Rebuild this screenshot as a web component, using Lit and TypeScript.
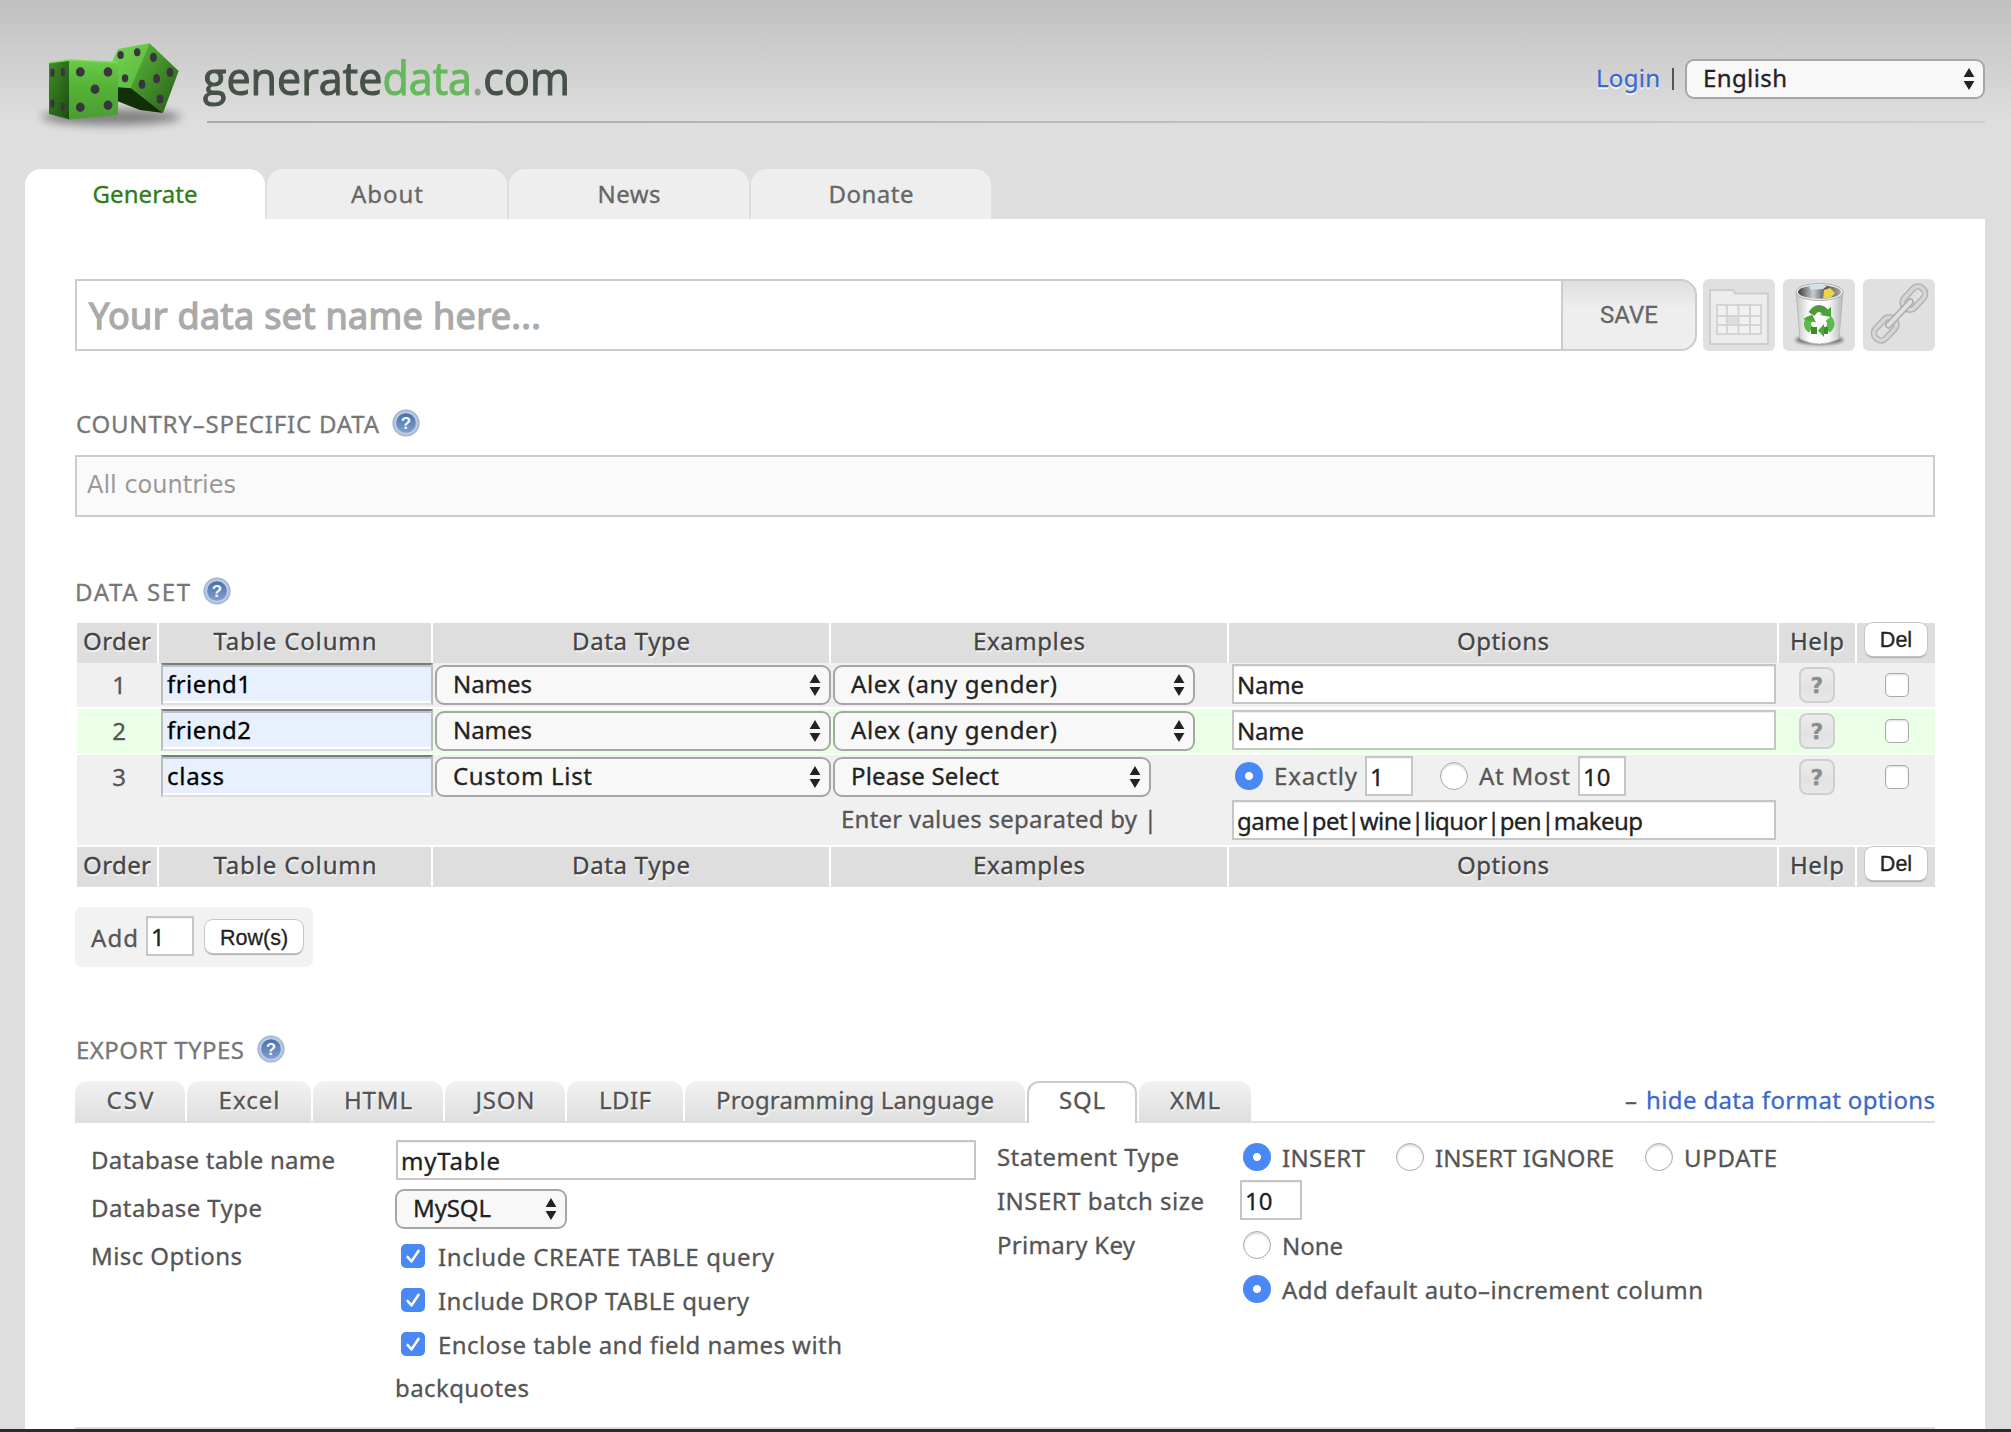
import { LitElement, html, css, svg } from "lit";
import { customElement, property } from "lit/decorators.js";
import { classMap } from "lit/directives/class-map.js";

/** Single run of text whose tracking is adjusted so that it spans `w` pixels. */
@customElement("fit-text")
class FitText extends LitElement {
  @property({ type: Number }) w = 0;
  @property() text = "";
  static styles = css`
    :host { display: inline-block; white-space: pre; }
  `;
  render() {
    return html`<span>${this.text}</span>`;
  }
  updated() {
    if (!this.w) return;
    this.style.letterSpacing = "0px";
    const span = this.renderRoot.querySelector("span")!;
    const gap = (this.w - span.getBoundingClientRect().width) / Math.max(1, this.text.length - 1);
    this.style.letterSpacing = gap.toFixed(3) + "px";
    this.style.marginRight = (-gap).toFixed(3) + "px";
  }
}

const t = (text: string, w = 0) => html`<fit-text .text=${text} .w=${w ? w + 2 : 0}></fit-text>`;

const arrows = html`<svg class="arrows" width="12" height="24" viewBox="0 0 12 24">
  <path d="M6 1 11.4 10H.6zM6 23 .6 14h10.8z" fill="#222" />
</svg>`;

const select = (text: string, w: number, cls: string) =>
  html`<div class="select ${cls}">${t(text, w)}${arrows}</div>`;

const radio = (on = false) => html`<span class=${classMap({ radio: true, on })}></span>`;

const check = (on = false) => html`<span class=${classMap({ check: true, on })}>
  ${on
    ? html`<svg width="24" height="24" viewBox="0 0 24 24"><path d="M6.6 13l3.9 4.4L17.6 6.8" fill="none" stroke="#fff" stroke-width="2.6" stroke-linecap="round" stroke-linejoin="round" /></svg>`
    : ""}
</span>`;

const info = html`<svg class="info" width="28" height="28" viewBox="0 0 28 28">
  <defs>
    <linearGradient id="ig" x1="0" y1="0" x2="0" y2="1">
      <stop offset="0" stop-color="#4a6ea8" /><stop offset="1" stop-color="#7f9fd0" />
    </linearGradient>
  </defs>
  <circle cx="14" cy="14" r="13.6" fill="#a3b2cc" />
  <circle cx="14" cy="14" r="12.2" fill="#b9c9e2" />
  <circle cx="14" cy="14" r="9.8" fill="url(#ig)" />
  <text x="14" y="20.2" text-anchor="middle" font-family="Liberation Sans, sans-serif" font-weight="700" font-size="17" fill="#f4f7fc">?</text>
</svg>`;

const pips = (list: number[][], rx: number, ry: number) =>
  list.map(([x, y]) => svg`<ellipse cx=${x} cy=${y} rx=${rx} ry=${ry} fill="#38353c"/>`);

const dice = html`<svg class="dice" width="180" height="118" viewBox="20 32 180 118">
  <defs>
    <linearGradient id="d1" x1="0" y1="0" x2="0" y2="1"><stop offset="0" stop-color="#6ccb49" /><stop offset=".45" stop-color="#55b236" /><stop offset="1" stop-color="#4b9d33" /></linearGradient>
    <linearGradient id="d2" x1="0" y1="0" x2="1" y2="1"><stop offset="0" stop-color="#3f8f26" /><stop offset="1" stop-color="#1b4a10" /></linearGradient>
    <linearGradient id="d3" x1="0" y1="0" x2="1" y2="1"><stop offset="0" stop-color="#5cba3c" /><stop offset="1" stop-color="#265c17" /></linearGradient>
    <linearGradient id="d4" x1="0" y1="0" x2="1" y2="1"><stop offset="0" stop-color="#74d452" /><stop offset="1" stop-color="#58b63a" /></linearGradient>
    <filter id="db" x="-20%" y="-80%" width="140%" height="260%"><feGaussianBlur stdDeviation="5" /></filter>
  </defs>
  <ellipse cx="111" cy="117" rx="70" ry="8" fill="#000" opacity=".42" filter="url(#db)" />
  <path d="M112 62 118 49 149.5 43.3 131 88.5 118 87z" fill="url(#d4)" />
  <path d="M149.5 43.3 178.7 71 163 113 130.5 88.3z" fill="url(#d3)" />
  <path d="M117 87 131 88.3 163 113 140 110 117 101z" fill="#123008" />
  ${pips([[120.6, 55], [137.2, 52.3], [125, 78.3]], 3.2, 4)}
  ${pips([[153.4, 57.3], [170, 72.3], [156.6, 78.7], [142, 84.3], [160, 99]], 3.4, 4.6)}
  <path d="M49 62.7 70 60 70 119.5 49 114z" fill="url(#d2)" />
  <path d="M69 60 118 62.5 118 115 69 119.5z" fill="url(#d1)" />
  <path d="M49 62.7 70 60 118 62.5" fill="none" stroke="#7ddb5c" stroke-width="1.4" />
  ${pips([[80.3, 72], [108, 72], [95, 89.3], [80.3, 107.3], [108, 105.3]], 4.4, 4.7)}
  ${pips([[52.5, 72.7], [63, 72], [52.5, 103.5], [63, 106.7]], 2.2, 4.3)}
</svg>`;

const folderIcon = html`<svg width="72" height="72" viewBox="0 0 72 72">
  <path d="M7 65V11h23l2 3.5h33V65z" fill="#ececec" stroke="#cdcdcd" stroke-width="2" stroke-linejoin="round" />
  <path d="M14 26h44v29H14z" fill="#f1f1f1" stroke="#d4d4d4" stroke-width="2" />
  <path d="M24 37h11v9H24z" fill="#dedede" />
  <path d="M24 26v29M35.500 26v29M47 26v29M14 37h44M14 46h44" stroke="#d4d4d4" stroke-width="2" />
</svg>`;

const binIcon = html`<svg width="72" height="72" viewBox="0 0 72 72">
  <defs>
    <linearGradient id="b1"><stop offset="0" stop-color="#c4c4c4" /><stop offset=".3" stop-color="#fff" /><stop offset=".7" stop-color="#f8f8f8" /><stop offset="1" stop-color="#b4b4b4" /></linearGradient>
    <linearGradient id="b2"><stop offset="0" stop-color="#3a3a3a" /><stop offset=".35" stop-color="#c8ccd0" /><stop offset=".65" stop-color="#555" /><stop offset="1" stop-color="#aaa" /></linearGradient>
    <filter id="bb" x="-20%" y="-60%" width="140%" height="220%"><feGaussianBlur stdDeviation="1.8" /></filter>
  </defs>
  <ellipse cx="36.500" cy="61" rx="24" ry="5" fill="#000" opacity=".45" filter="url(#bb)" />
  <path d="M13 13 17 60Q36 70 56 60L60 13z" fill="url(#b1)" stroke="#b4b4b4" stroke-width=".8" />
  <ellipse cx="36.500" cy="13" rx="23.500" ry="8.500" fill="#ececec" stroke="#b0b0b0" stroke-width="1" />
  <ellipse cx="36.500" cy="13" rx="21.500" ry="6.700" fill="url(#b2)" />
  <path d="M26 8l10-2.500 8 1.500-4 3-12 1z" fill="#cfe3ee" />
  <path d="M41 11l6-2 5 5-4 4.500-8 1z" fill="#ead84a" />
  <g fill="none" stroke-width="7">
    <path d="M28.500 35Q32 29.500 36 29.500 40 29.500 43 34" stroke="#4f9a3c" />
    <path d="M27 39.500Q21.500 46 28 51" stroke="#5cba4c" />
    <path d="M45.500 39.500Q50.500 46 44.500 51" stroke="#5cba4c" />
    <path d="M28 51.500H34M38 51.500h7" stroke="#3f8a2c" />
  </g>
  <path d="M37 36l11 2 0-10zM35 51.500l6-6.500v13zM20 40l9-4.500 4 8z" fill="#4da53b" />
</svg>`;

const linkIcon = html`<svg width="72" height="72" viewBox="0 0 72 72">
  <g fill="none" stroke-linejoin="round" stroke-linecap="round" transform="translate(36.500 34.500) rotate(-47)">
    <g stroke="#b2b2b2" stroke-width="6.500">
      <rect x="8" y="-7" width="26" height="14" rx="6.500" /><rect x="-34" y="-7" width="26" height="14" rx="6.500" />
    </g>
    <g stroke="#d6d6d6" stroke-width="3.600">
      <rect x="8" y="-7" width="26" height="14" rx="6.500" /><rect x="-34" y="-7" width="26" height="14" rx="6.500" />
    </g>
    <path d="M-16 0H16" stroke="#acacac" stroke-width="7" /><path d="M-16 0H16" stroke="#e0e0e0" stroke-width="4" />
  </g>
</svg>`;

const headRow = html`
  <div class="th">${t("Order", 66)}</div>
  <div class="th">${t("Table Column", 161)}</div>
  <div class="th">${t("Data Type", 116)}</div>
  <div class="th">${t("Examples", 110)}</div>
  <div class="th">${t("Options", 90)}</div>
  <div class="th">${t("Help", 52)}</div>
  <div class="th del"><span class="btn">Del</span></div>`;

const rows = [
  { name: "friend1", nw: 82, type: "Names", tw: 77, green: false },
  { name: "friend2", nw: 82, type: "Names", tw: 77, green: true },
  { name: "class", nw: 55, type: "Custom List", tw: 137, green: false, list: true },
];

const exportTabs: [string, number, string][] = [
  ["CSV", 45, "w110"], ["Excel", 59, "w124"], ["HTML", 66, "w130"], ["JSON", 57, "w120"],
  ["LDIF", 50, "w116"], ["Programming Language", 276, "w340"], ["SQL", 44, "w110 sel"], ["XML", 48, "w112"],
];

@customElement("app-root")
class AppRoot extends LitElement {
  static styles = css`
    :host {
      display: flex; flex-direction: column; width: 2011px; height: 1432px; overflow: hidden;
      background: linear-gradient(#c0c0c0, #dedede 122px); color: #555;
      font: 24px/44px "Noto Sans", "Open Sans", sans-serif; -webkit-text-stroke: .3px;
    }
    * { box-sizing: border-box; }
    svg { display: block; flex: none; -webkit-text-stroke: 0; }
    .header { display: flex; height: 169px; padding: 0 26px 0 20px; flex: none; }
    .dice { margin-top: 32px; }
    .brand { flex: 1; margin-left: 7px; display: flex; flex-direction: column; }
    .top { height: 121px; display: flex; align-items: flex-start; }
    .logo {
      font: 46px/60px "Open Sans", "Noto Sans", sans-serif; color: #465148; margin: 47px auto 0 -4px; white-space: nowrap;
      -webkit-text-stroke: 1.1px; transform: scaleX(.937); transform-origin: 0 0;
    }
    .logo .g { color: #66b85c; }
    .logo .d { color: #999; }
    .rule { height: 2px; background: linear-gradient(90deg, #a9a9a9, #cecece); }
    .login { color: #3b68cc; text-shadow: 0 2px 1px #fff; margin-top: 56px; }
    .bar { width: 2px; height: 22px; background: #555; margin: 68px 11px 0 12px; }
    .select {
      display: flex; align-items: center; justify-content: space-between; height: 40px; line-height: 36px;
      border: 2px solid #a6a6a6; border-radius: 9px; background: #f8f8f8; color: #222; padding: 0 8px 0 16px; flex: none;
    }
    .select fit-text { margin-top: -2px; }
    .lang { width: 300px; margin-top: 59px; }
    .tabs { display: flex; gap: 2px; padding-left: 25px; flex: none; }
    .tab { width: 240px; height: 50px; line-height: 49px; text-align: center; border-radius: 16px 16px 0 0; background: #eee; color: #666; }
    .tab.sel { background: #fff; color: #2f7d18; }
    .panel { flex: 1; margin: 0 26px 0 25px; background: #fff; padding: 60px 50px 0; display: flex; flex-direction: column; }
    .save-row { display: flex; height: 72px; flex: none; }
    .name { flex: 1; border: 2px solid #ccc; border-right: 0; padding-left: 12px; font-size: 36px; line-height: 70px; -webkit-text-stroke: 1.3px; color: #aaa; }
    .save {
      width: 136px; border: 2px solid #ccc; border-radius: 0 16px 16px 0; background: linear-gradient(#dfdfdf, #eee 40%);
      color: #666; font: 24px/68px Roboto, sans-serif; text-align: center; margin-right: 6px;
    }
    .tool { width: 72px; height: 72px; border-radius: 6px; background: #e0e0e0; }
    .tool + .tool { margin-left: 8px; }
    .title { display: flex; align-items: center; gap: 13px; color: #777; flex: none; height: 32px; padding-left: 1px; }
    .title fit-text { position: relative; top: 1px; }
    .t1 { margin-top: 56px; }
    .countries { height: 62px; margin-top: 16px; border: 2px solid #ccc; background: #fafafa; color: #999; font: 24px/57px "DejaVu Sans", sans-serif; padding-left: 10px; flex: none; -webkit-text-stroke: 0; }
    .t2 { margin-top: 58px; padding-left: 0; }
    .grid { display: flex; flex-direction: column; gap: 2px; margin: 16px 0 0 2px; flex: none; }
    .cells { display: grid; grid-template-columns: 80px 272px 396px 396px 548px 76px 78px; column-gap: 2px; }
    .row { background: #f0f0f0; height: 44px; }
    .row.tall { height: 90px; }
    .row.green { background: #ebffe6; }
    .row.first { margin-top: -2px; }
    .th { background: #dedede; height: 40px; line-height: 35px; text-align: center; color: #444; text-shadow: 1px 2px 1px #f6f6f6; }
    .th.del { display: flex; justify-content: center; }
    .btn {
      height: 33px; width: 62px; text-align: center; background: #fff; border-radius: 8px; color: #222; text-shadow: none;
      font: 21.500px/35px "Liberation Sans", sans-serif; box-shadow: 0 0 0 1px #c6c6c6, 0 2px 1px #aaa;
    }
    .num { text-align: center; line-height: 43px; padding-left: 4px; }
    .field {
      margin-left: 2px; width: 272px; height: 42px; border: 2px solid #bdbdbd; border-top-color: #7c7c7c; border-bottom-color: #ddd;
      background: #e8f0fe; box-shadow: inset 0 2px #bfc1c6, inset 0 -2px #fff; color: #000; padding-left: 4px; line-height: 38px;
    }
    .fill { width: 396px; margin: 2px 0 0 2px; }
    .ex { width: 362px; margin: 2px 0 0 2px; }
    .ex.short { width: 318px; }
    .hint { padding-left: 10px; line-height: 41px; margin-top: 1px; }
    .opts { padding: 1px 0 0 3px; }
    .input { height: 40px; border: 2px solid #c6c6c6; background: #fff; color: #222; line-height: 37px; padding-left: 3px; flex: none; box-shadow: inset 0 1px 1px #eee; }
    .opts > .input { width: 544px; }
    .i48 { width: 48px; }
    .line { display: flex; align-items: center; height: 40px; margin-bottom: 4px; padding-left: 3px; line-height: 38px; }
    .line fit-text { padding-left: 11px; }
    .line .input { margin: 0 27px 0 8px; }
    .radio { width: 28px; height: 28px; border-radius: 50%; background: #fff; border: 1px solid #aaa; box-shadow: inset 0 2px 2px #ddd; flex: none; }
    .radio.on { border: 0; background: radial-gradient(circle, #fff 3.600px, #4a88f6 4.400px); box-shadow: none; }
    .check { display: block; width: 24px; height: 24px; border-radius: 5px; background: #fff; border: 1px solid #aaa; box-shadow: inset 0 1px 2px #ddd; flex: none; }
    .check.on { background: #4a88f6; border: 0; box-shadow: none; }
    .q {
      width: 36px; height: 36px; margin: 4px auto; border: 2px solid #cfcfcf; border-radius: 8px; background: linear-gradient(#ececec, #e2e2e2 60%, #e8e8e8);
      color: #8c8c8c; font: 700 22px/33px "DejaVu Sans", sans-serif; text-align: center;
    }
    .ck { padding: 10px 0 0 28px; }
    .add { display: flex; align-items: center; width: 238px; height: 60px; margin-top: 20px; padding-left: 16px; background: #f2f2f2; border-radius: 7px; flex: none; line-height: 57px; }
    .add .input { margin: 0 11px 2px 8px; }
    .add .btn { width: 98px; margin-bottom: 1px; line-height: 36px; }
    .t3 { margin-top: 66px; }
    .etabs { display: flex; gap: 2px; height: 42px; margin-top: 16px; background: linear-gradient(transparent 40px, #e0e0e0 40px); flex: none; }
    .etab { text-align: center; line-height: 38px; border-radius: 12px 12px 0 0; background: linear-gradient(#f2f2f2, #dedede); text-shadow: 1px 2px 1px #f8f8f8; }
    .etab.sel { background: #fff; border: 2px solid #ccc; border-bottom: 0; line-height: 34px; text-shadow: none; }
    .w110 { width: 110px; } .w124 { width: 124px; } .w130 { width: 130px; } .w120 { width: 120px; }
    .w116 { width: 116px; } .w340 { width: 340px; } .w112 { width: 112px; }
    .hide { margin-left: auto; line-height: 38px; display: flex; gap: 9px; }
    .link { color: #3b68cc; }
    .options { display: grid; grid-template-columns: 304px 599px 245px 1fr; padding: 12px 0 0 16px; height: 304px; flex: none; }
    .col { display: flex; flex-direction: column; align-items: flex-start; }
    .lab48 > * { height: 48px; line-height: 48px; }
    .c1 { padding-top: 1px; }
    .dbname { width: 580px; margin: 5px 0 8px 1px; }
    .dbtype { width: 172px; margin: 1px 0 5px; }
    .cr { display: flex; align-items: center; height: 44px; padding-left: 6px; gap: 13px; line-height: 43px; }
    .c3 { padding-left: 3px; line-height: 43px; }
    .c3 > * { height: 44px; }
    .c4 > .input { width: 62px; margin: 1px 0 3px 1px; }
    .rr { display: flex; align-items: center; height: 44px; padding-left: 4px; gap: 11px; line-height: 43px; }
    .rr .radio + fit-text + .radio { margin-left: 20px; }
    .endline { height: 2px; background: #ddd; }
    .dark { height: 3px; background: #2b2b2b; flex: none; }
  `;

  render() {
    return html`
      <div class="header">
        ${dice}
        <div class="brand">
          <div class="top">
            <div class="logo">generate<span class="g">data</span><span class="d">.</span>com</div>
            <div class="login">${t("Login", 62)}</div>
            <div class="bar"></div>
            ${select("English", 82, "lang")}
          </div>
          <div class="rule"></div>
        </div>
      </div>
      <div class="tabs">
        <div class="tab sel">${t("Generate", 103)}</div>
        <div class="tab">${t("About", 70)}</div>
        <div class="tab">${t("News", 61)}</div>
        <div class="tab">${t("Donate", 83)}</div>
      </div>
      <div class="panel">
        <div class="save-row">
          <div class="name">${t("Your data set name here...", 450)}</div>
          <div class="save">${t("SAVE", 56)}</div>
          <div class="tool">${folderIcon}</div>
          <div class="tool">${binIcon}</div>
          <div class="tool">${linkIcon}</div>
        </div>
        <div class="title t1">${t("COUNTRY–SPECIFIC DATA", 301)}${info}</div>
        <div class="countries">${t("All countries", 147)}</div>
        <div class="title t2">${t("DATA SET", 113)}${info}</div>
        <div class="grid">
          <div class="cells">${headRow}</div>
          ${rows.map((r, i) => html`
            <div class=${classMap({ cells: true, row: true, green: r.green, tall: !!r.list, first: i === 0 })}>
              <div class="num">${i + 1}</div>
              <div class="field">${t(r.name, r.nw)}</div>
              <div>${select(r.type, r.tw, "fill")}</div>
              ${r.list
                ? html`<div>${select("Please Select", 146, "ex short")}<div class="hint">${t("Enter values separated by |", 314)}</div></div>
                    <div class="opts">
                      <div class="line">
                        ${radio(true)}${t("Exactly", 81)}<span class="input i48">1</span>
                        ${radio()}${t("At Most", 89)}<span class="input i48">10</span>
                      </div>
                      <div class="input">${t("game|pet|wine|liquor|pen|makeup", 404)}</div>
                    </div>`
                : html`<div>${select("Alex (any gender)", 204, "ex")}</div>
                    <div class="opts"><div class="input">${t("Name", 65)}</div></div>`}
              <div><div class="q">?</div></div>
              <div class="ck">${check()}</div>
            </div>`)}
          <div class="cells">${headRow}</div>
        </div>
        <div class="add">${t("Add", 45)}<span class="input i48">1</span><span class="btn">Row(s)</span></div>
        <div class="title t3">${t("EXPORT TYPES", 166)}${info}</div>
        <div class="etabs">
          ${exportTabs.map(([label, w, cls]) => html`<div class="etab ${cls}">${t(label, w)}</div>`)}
          <div class="hide"><span>–</span><span class="link">${t("hide data format options", 287)}</span></div>
        </div>
        <div class="options">
          <div class="col c1 lab48">
            ${t("Database table name", 242)}${t("Database Type", 169)}${t("Misc Options", 149)}
          </div>
          <div class="col">
            <div class="input dbname">${t("myTable", 97)}</div>
            ${select("MySQL", 76, "dbtype")}
            <div class="cr">${check(true)}${t("Include CREATE TABLE query", 334)}</div>
            <div class="cr">${check(true)}${t("Include DROP TABLE query", 309)}</div>
            <div class="cr">${check(true)}${t("Enclose table and field names with", 402)}</div>
            ${t("backquotes", 132)}
          </div>
          <div class="col c3">
            ${t("Statement Type", 180)}${t("INSERT batch size", 205)}${t("Primary Key", 136)}
          </div>
          <div class="col c4">
            <div class="rr">${radio(true)}${t("INSERT", 81)}${radio()}${t("INSERT IGNORE", 177)}${radio()}${t("UPDATE", 91)}</div>
            <div class="input">10</div>
            <div class="rr">${radio()}${t("None", 59)}</div>
            <div class="rr">${radio(true)}${t("Add default auto–increment column", 419)}</div>
          </div>
        </div>
        <div class="endline"></div>
      </div>
      <div class="dark"></div>
    `;
  }
}
